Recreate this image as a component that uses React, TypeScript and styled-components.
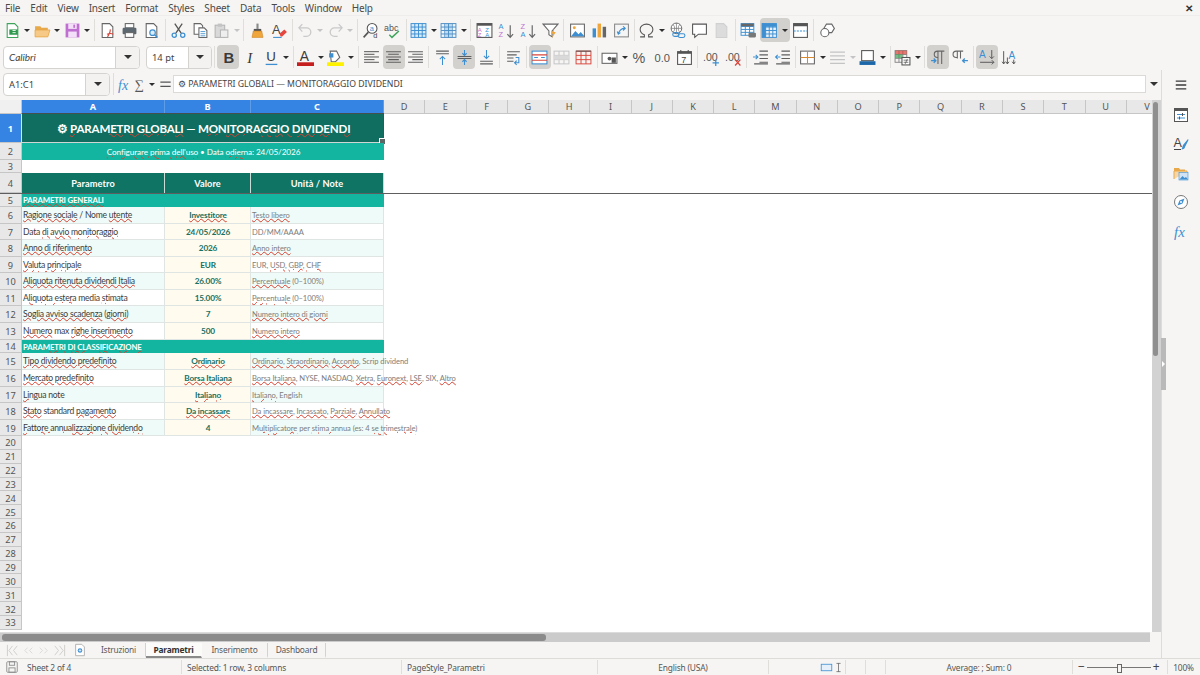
import React from "react";
import styled, { createGlobalStyle } from "styled-components";

const UI_FONT = `"Noto Sans", "Open Sans", sans-serif`;
const CELL_FONT = `Lato, Carlito, "Noto Sans", sans-serif`;

const GlobalStyle = createGlobalStyle`
  html, body { margin: 0; padding: 0; background: #f6f5f4; }
  * { box-sizing: border-box; }
`;

const Page = styled.div`
  width: 1200px;
  height: 675px;
  overflow: hidden;
  display: flex;
  flex-direction: column;
  background: #f6f5f4;
  font-family: ${UI_FONT};
  color: #3d3d3d;
`;

const MenuBar = styled.div`
  height: 16px;
  flex: none;
  display: flex;
  align-items: center;
  justify-content: space-between;
  padding: 0 7px 0 5px;
  border-bottom: 1px solid #eeedeb;
`;

const MenuItems = styled.div`
  display: flex;
  gap: 10px;
  font-size: 10px;
  letter-spacing: -0.18px;
  color: #4a4a4a;
`;

const CloseMark = styled.span`
  font-size: 10px;
  font-weight: 700;
  color: #333;
`;

const Toolbar = styled.div<{ $pad?: number; $h: number }>`
  height: ${(p) => p.$h}px;
  flex: none;
  display: flex;
  align-items: center;
  padding-left: ${(p) => p.$pad ?? 2}px;
`;

const IconButton = styled.div<{ $active?: boolean; $narrow?: boolean; $split?: boolean }>`
  width: ${(p) => (p.$narrow ? 20 : 22)}px;
  height: 24px;
  flex: none;
  display: flex;
  align-items: center;
  justify-content: center;
  border-radius: ${(p) => (p.$split ? "4px 0 0 4px" : "4px")};
  background: ${(p) => (p.$active ? "#d3d1ce" : "transparent")};
`;

const Drop = styled.div<{ $active?: boolean; $dim?: boolean }>`
  width: 10px;
  height: 24px;
  flex: none;
  display: flex;
  align-items: center;
  justify-content: center;
  border-radius: 0 4px 4px 0;
  background: ${(p) => (p.$active ? "#d3d1ce" : "transparent")};
  &::after {
    content: "";
    border-left: 3px solid transparent;
    border-right: 3px solid transparent;
    border-top: 3px solid ${(p) => (p.$dim ? "#c4c4c4" : "#2e2e2e")};
  }
`;

const Sep = styled.div<{ $w?: number }>`
  width: ${(p) => p.$w ?? 4.75}px;
  height: 22px;
  flex: none;
  display: flex;
  justify-content: center;
  &::after {
    content: "";
    width: 1px;
    background: #e0dedb;
  }
`;

const Combo = styled.div<{ $w: number; $arrow: number; $ml?: number }>`
  width: ${(p) => p.$w}px;
  height: 23px;
  flex: none;
  margin-left: ${(p) => p.$ml ?? 0}px;
  display: flex;
  background: #fff;
  border: 1px solid #d5d3cf;
  border-radius: 4px;
  overflow: hidden;
  & > span {
    flex: 1;
    display: flex;
    align-items: center;
    padding-left: 5px;
    font-size: 9.4px;
    color: #444;
  }
  & > div {
    width: ${(p) => p.$arrow}px;
    display: flex;
    align-items: center;
    justify-content: center;
    background: #f3f2f0;
    border-left: 1px solid #d5d3cf;
  }
  & > div::after {
    content: "";
    border-left: 4px solid transparent;
    border-right: 4px solid transparent;
    border-top: 4px solid #333;
  }
`;

const FontName = styled.span`
  font-family: ${CELL_FONT};
  font-style: italic;
  font-size: 10px !important;
`;

const Middle = styled.div`
  flex: 1;
  min-height: 0;
  display: flex;
`;

const MainColumn = styled.div`
  width: 1161px;
  flex: none;
  display: flex;
  flex-direction: column;
`;

const Sidebar = styled.div`
  flex: 1;
  position: relative;
  display: flex;
  flex-direction: column;
  align-items: center;
  padding: 4px 0 0 0;
  gap: 7px;
  border-left: 1px solid #dedcd9;
`;

const SidebarButton = styled.div<{ $top?: boolean }>`
  width: 22px;
  height: 22px;
  margin-bottom: ${(p) => (p.$top ? 1 : 0)}px;
  display: flex;
  align-items: center;
  justify-content: center;
`;

const SideHandle = styled.div`
  position: absolute;
  left: -1px;
  top: 268px;
  width: 5px;
  height: 52px;
  background: #b9b9b9;
  display: flex;
  align-items: center;
  &::after {
    content: "";
    border-top: 3px solid transparent;
    border-bottom: 3px solid transparent;
    border-left: 3px solid #fff;
    margin-left: 1px;
  }
`;

const FormulaBar = styled.div`
  height: 30px;
  flex: none;
  display: flex;
  align-items: center;
  padding: 0 0 2px 3px;
`;

const FormulaIcon = styled.div<{ $w: number }>`
  width: ${(p) => p.$w}px;
  height: 22px;
  flex: none;
  display: flex;
  align-items: center;
  justify-content: center;
`;

const FormulaInput = styled.div`
  width: 973px;
  height: 18px;
  flex: none;
  background: #fff;
  border: 1px solid #dcdad6;
  display: flex;
  align-items: center;
  padding-left: 4px;
  font-size: 8.7px;
  color: #444;
  white-space: nowrap;
`;

const FormulaDrop = styled.div`
  flex: 1;
  display: flex;
  justify-content: center;
  &::after {
    content: "";
    border-left: 4px solid transparent;
    border-right: 4px solid transparent;
    border-top: 4px solid #333;
  }
`;

const SheetArea = styled.div`
  height: 532px;
  flex: none;
  display: flex;
`;

const Sheet = styled.div`
  width: 1152px;
  flex: none;
  overflow: hidden;
  background: #fff;
  display: flex;
  flex-direction: column;
  position: relative;
`;

const HeaderRow = styled.div`
  height: 14px;
  flex: none;
  display: flex;
  background: #e8e8e8;
  border-bottom: 1px solid #c6c6c6;
`;

const Corner = styled.div`
  width: 22px;
  flex: none;
  background: #f0f0f0;
  border-right: 1px solid #c6c6c6;
`;

const ColHead = styled.div<{ $w: number; $on?: boolean }>`
  width: ${(p) => p.$w}px;
  flex: none;
  display: flex;
  align-items: center;
  justify-content: center;
  font-size: 9.2px;
  font-weight: ${(p) => (p.$on ? 700 : 400)};
  color: ${(p) => (p.$on ? "#fff" : "#555")};
  background: ${(p) => (p.$on ? "#3584e4" : "transparent")};
  border-right: 1px solid ${(p) => (p.$on ? "#5d9ce8" : "#c6c6c6")};
`;

const Row = styled.div<{ $h: number; $frozen?: boolean }>`
  height: ${(p) => p.$h}px;
  flex: none;
  display: flex;
  position: relative;
  ${(p) => (p.$frozen ? "box-shadow: 0 1px 0 #5e5e5e; z-index: 1;" : "")}
`;

const RowHead = styled.div<{ $on?: boolean }>`
  width: 22px;
  flex: none;
  display: flex;
  align-items: center;
  justify-content: center;
  padding-top: 1px;
  font-size: 9.2px;
  font-weight: ${(p) => (p.$on ? 700 : 400)};
  color: ${(p) => (p.$on ? "#fff" : "#555")};
  background: ${(p) => (p.$on ? "#3584e4" : "#e8e8e8")};
  border-right: 1px solid #c6c6c6;
  border-bottom: 1px solid #c6c6c6;
`;

const Cell = styled.div<{ $w: number; $bg?: string; $tone?: "label" | "value" | "note" }>`
  width: ${(p) => p.$w}px;
  flex: none;
  display: flex;
  align-items: center;
  justify-content: ${(p) => (p.$tone === "value" ? "center" : "flex-start")};
  padding-left: 1px;
  white-space: nowrap;
  font-family: ${CELL_FONT};
  background: ${(p) => p.$bg ?? "#fff"};
  border-right: 1px solid #dfe5e3;
  border-bottom: 1px solid #dfe5e3;
  font-size: ${(p) => (p.$tone === "note" ? 7.6 : p.$tone === "value" ? 8.2 : 8.6)}px;
  letter-spacing: ${(p) => (p.$tone === "note" ? -0.08 : p.$tone === "value" ? -0.15 : -0.25)}px;
  font-weight: ${(p) => (p.$tone === "value" ? 700 : 400)};
  color: ${(p) => (p.$tone === "note" ? "#7d7d7d" : p.$tone === "value" ? "#17705f" : "#3c3c3c")};
`;

const Banner = styled.div<{ $bg: string; $size: number; $bold?: boolean; $center?: boolean; $track?: number }>`
  width: 362px;
  flex: none;
  display: flex;
  align-items: center;
  justify-content: ${(p) => (p.$center ? "center" : "flex-start")};
  padding-left: 1px;
  white-space: nowrap;
  font-family: ${CELL_FONT};
  font-size: ${(p) => p.$size}px;
  font-weight: ${(p) => (p.$bold ? 700 : 400)};
  letter-spacing: ${(p) => p.$track ?? 0}px;
  color: #fff;
  background: ${(p) => p.$bg};
`;

const HeadCell = styled.div<{ $w: number }>`
  width: ${(p) => p.$w}px;
  flex: none;
  display: flex;
  align-items: center;
  justify-content: center;
  font-family: ${CELL_FONT};
  font-size: 9.2px;
  font-weight: 700;
  letter-spacing: 0.1px;
  color: #fff;
  background: #0f7464;
  border-right: 1px solid #c9dcd8;
`;

const Selection = styled.div`
  position: absolute;
  left: 21px;
  top: -1px;
  width: 363px;
  height: 30px;
  border: 1px solid #44504d;
  border-left-color: #dfe5e3;
  border-bottom-color: #cfd6d4;
  pointer-events: none;
  &::after {
    content: "";
    position: absolute;
    right: -3px;
    bottom: -3px;
    width: 5px;
    height: 5px;
    background: #5c6664;
    border: 1px solid #fff;
  }
`;

const Spell = styled.span`
  text-decoration: underline wavy #d8402f 0.7px;
  text-underline-offset: 0px;
`;

const VScroll = styled.div`
  flex: 1;
  background: #d2d2d2;
  padding: 2px 3px 0 1px;
`;

const VThumb = styled.div`
  height: 254px;
  background: #8f8f8f;
  border-radius: 3px;
`;

const HScroll = styled.div`
  height: 10px;
  width: 1150px;
  flex: none;
  background: #cbcbcb;
  padding: 1px 0 0 2px;
  border-top: 1px solid #dcdcdc;
`;

const HThumb = styled.div`
  width: 544px;
  height: 7px;
  background: #8b8b8b;
  border-radius: 3px;
`;

const TabBar = styled.div`
  height: 16px;
  flex: none;
  display: flex;
  align-items: center;
  padding-left: 6px;
  font-size: 8.4px;
  letter-spacing: -0.18px;
  color: #555;
`;

const NavArrows = styled.div`
  width: 60px;
  display: flex;
  align-items: center;
`;

const Tab = styled.div<{ $on?: boolean; $w: number }>`
  width: ${(p) => p.$w}px;
  height: 15px;
  flex: none;
  display: flex;
  align-items: center;
  justify-content: center;
  font-weight: ${(p) => (p.$on ? 700 : 400)};
  color: ${(p) => (p.$on ? "#333" : "#5a5a5a")};
  border-right: 1px solid ${(p) => (p.$on ? "transparent" : "#d4d2cf")};
  border-bottom: 2px solid ${(p) => (p.$on ? "#8a8a8a" : "transparent")};
  background: ${(p) => (p.$on ? "#fbfbfa" : "transparent")};
`;

const NewTab = styled.div`
  width: 19px;
  margin-left: 7px;
  display: flex;
  align-items: center;
`;

const StatusBar = styled.div`
  height: 17px;
  flex: none;
  display: flex;
  align-items: center;
  border-top: 1px solid #dedcd9;
  font-size: 8.4px;
  letter-spacing: -0.18px;
  color: #555;
`;

const StatusCell = styled.div<{ $w: number; $center?: boolean; $pad?: number; $noline?: boolean }>`
  width: ${(p) => p.$w}px;
  height: 14px;
  flex: none;
  display: flex;
  align-items: center;
  justify-content: ${(p) => (p.$center ? "center" : "flex-start")};
  padding-left: ${(p) => p.$pad ?? 0}px;
  white-space: nowrap;
  border-right: 1px solid ${(p) => (p.$noline ? "transparent" : "#e0deda")};
`;

const SheetCount = styled.span`
  margin-left: 8px;
`;

const ZoomTrack = styled.div`
  width: 64px;
  height: 1px;
  margin: 0 2px;
  background: #777;
  position: relative;
  &::after {
    content: "";
    position: absolute;
    left: 30px;
    top: -3px;
    width: 3px;
    height: 7px;
    background: #f6f5f4;
    border: 1px solid #666;
  }
`;

const ZoomSign = styled.span`
  font-size: 12px;
  line-height: 12px;
  color: #444;
`;

// toolbar drawings, 16 unit box
const grid = (x: number, y: number, w: number, h: number, cols: number, rows: number, c: string) => (
  <g stroke={c} fill="none" strokeWidth="0.9">
    <rect x={x} y={y} width={w} height={h} />
    {Array.from({ length: cols - 1 }, (_, i) => (
      <line key={"c" + i} x1={x + ((i + 1) * w) / cols} x2={x + ((i + 1) * w) / cols} y1={y} y2={y + h} />
    ))}
    {Array.from({ length: rows - 1 }, (_, i) => (
      <line key={"r" + i} y1={y + ((i + 1) * h) / rows} y2={y + ((i + 1) * h) / rows} x1={x} x2={x + w} />
    ))}
  </g>
);

const lines = (x: number, w: number, ys: number[], c = "#666", shortEvery = false) => (
  <g stroke={c} strokeWidth="1">
    {ys.map((y, i) => (
      <line key={i} x1={x} x2={x + (shortEvery && i % 2 ? w * 0.7 : w)} y1={y} y2={y} />
    ))}
  </g>
);

const doc = "M3 1.5h7l3 3v10H3z";

const ICONS: Record<string, React.ReactNode> = {
  newDoc: <><path d={doc} fill="#fff" stroke="#3fa45b" strokeWidth="1" /><rect x="5" y="7" width="8" height="5" fill="#2f9a4f" /><path d="M8 8h3M8 10h3" stroke="#fff" strokeWidth=".8" /></>,
  open: <><path d="M1 4h5l1 1.5h6V8H1z" fill="#e7a94a" /><path d="M1 14V7.5h14L13 14z" fill="#f6c987" stroke="#e7a94a" strokeWidth=".8" /></>,
  save: <><path d="M1.5 1.5h13v13h-13z" fill="#bf6fd0" /><rect x="4" y="1.5" width="8" height="5" fill="#f3dff7" /><rect x="4" y="9" width="8" height="5.5" fill="#f3dff7" /><rect x="8.8" y="2.5" width="1.6" height="3" fill="#bf6fd0" /></>,
  pdf: <><path d={doc} fill="#fff" stroke="#666" strokeWidth="1" /><path d="M8 14c2-3 3-5 2.5-7M7.5 11.5c2-.8 4-1 6 0" fill="none" stroke="#d9453a" strokeWidth="1.1" /></>,
  print: <><rect x="4" y="1.5" width="8" height="4" fill="#fff" stroke="#666" /><rect x="1.5" y="5.5" width="13" height="6" rx="1" fill="#5c6770" /><rect x="4" y="10" width="8" height="4.5" fill="#fff" stroke="#666" /></>,
  preview: <><path d={doc} fill="#fff" stroke="#666" /><circle cx="9" cy="10" r="2.6" fill="#dcecf8" stroke="#3d8fd1" strokeWidth="1.1" /><path d="M11 12l2.5 2.5" stroke="#3d8fd1" strokeWidth="1.4" /></>,
  cut: <><path d="M4.5 1.5l6 9M11.5 1.5l-6 9" stroke="#555" strokeWidth="1.2" /><circle cx="4" cy="12.5" r="2" fill="none" stroke="#3d8fd1" strokeWidth="1.2" /><circle cx="12" cy="12.5" r="2" fill="none" stroke="#3d8fd1" strokeWidth="1.2" /></>,
  copy: <><path d="M2 1.5h6l2 2v8H2z" fill="#fff" stroke="#666" /><path d="M6.5 5.5h5l2.5 2.5v6.5H6.5z" fill="#fff" stroke="#666" /><path d="M8 9h4.5M8 11h4.5M8 13h4.5" stroke="#3d8fd1" strokeWidth=".8" /></>,
  paste: <><rect x="2" y="3" width="9" height="11.5" fill="#d9d9d9" stroke="#b5b5b5" /><rect x="4.5" y="1.5" width="4" height="3" fill="#c4c4c4" /><rect x="7" y="7.5" width="7" height="7" fill="#eee" stroke="#b5b5b5" /></>,
  brush: <><path d="M7 1.5h2v5H7z" fill="#8a8a8a" /><path d="M4.5 6.5h7v2h-7z" fill="#555" /><path d="M4 8.5h8l1.2 6H2.8z" fill="#f0a63a" stroke="#c97f1e" strokeWidth=".5" /></>,
  clear: <><text x="1" y="11" fontSize="12" fontFamily="Liberation Sans" fill="#444">A</text><path d="M8 11l4.5-4 2.5 2.5-4.5 4.2H9z" fill="#e5463e" /><path d="M2 14.5h8" stroke="#3d8fd1" /></>,
  undo: <path d="M5 2L1.8 5.5 5 9M2 5.5h7a4 4 0 010 8H6" fill="none" stroke="#c9c9c9" strokeWidth="1.2" />,
  redo: <path d="M11 2l3.2 3.5L11 9M14 5.5H7a4 4 0 000 8h3" fill="none" stroke="#c9c9c9" strokeWidth="1.2" />,
  find: <><circle cx="9.5" cy="6" r="4.6" fill="#fff" stroke="#555" /><path d="M6 9.5l-4.5 5" stroke="#555" strokeWidth="1.5" /><text x="7.4" y="8" fontSize="7" fontFamily="Liberation Sans" fill="#3d8fd1">a</text><text x="10.5" y="15.5" fontSize="7" fontFamily="Liberation Sans" fill="#444">d</text></>,
  spell: <><text x="0" y="8" fontSize="8.4" fontFamily="Liberation Sans" fill="#555">abc</text><path d="M5 12l2.5 2.5L14 8.5" fill="none" stroke="#3fa45b" strokeWidth="1.4" /></>,
  table: <><rect x="1" y="1.5" width="14" height="13" fill="#dcebf8" />{grid(1, 1.5, 14, 13, 4, 4, "#3d8fd1")}</>,
  cols: <><rect x="1" y="1.5" width="14" height="13" fill="#eef5fb" />{grid(1, 1.5, 14, 13, 4, 4, "#4f8fc4")}<rect x="5.5" y="1.5" width="5" height="13" fill="#3d8fd1" opacity=".25" /></>,
  sortBox: <><rect x="1" y="1.5" width="14" height="13" fill="#fff" stroke="#555" /><rect x="1" y="1.5" width="14" height="2" fill="#555" /><text x="1.6" y="9" fontSize="5.6" fontFamily="Liberation Sans" fill="#bf6fd0">A</text><text x="8.6" y="9" fontSize="5.6" fontFamily="Liberation Sans" fill="#3d8fd1">Z</text><text x="1.6" y="14" fontSize="5.6" fontFamily="Liberation Sans" fill="#bf6fd0">Z</text><text x="8.6" y="14" fontSize="5.6" fontFamily="Liberation Sans" fill="#3d8fd1">A</text></>,
  sortAsc: <><text x="0.5" y="7" fontSize="7" fontFamily="Liberation Sans" fill="#3d8fd1">A</text><text x="0.5" y="14.5" fontSize="7" fontFamily="Liberation Sans" fill="#bf6fd0">Z</text><path d="M11.5 3v11M8.8 11.5l2.7 3 2.7-3" fill="none" stroke="#666" strokeWidth="1.1" /></>,
  sortDesc: <><text x="0.5" y="7" fontSize="7" fontFamily="Liberation Sans" fill="#bf6fd0">Z</text><text x="0.5" y="14.5" fontSize="7" fontFamily="Liberation Sans" fill="#3d8fd1">A</text><path d="M11.5 3v11M8.8 11.5l2.7 3 2.7-3" fill="none" stroke="#666" strokeWidth="1.1" /></>,
  filter: <><path d="M1 2h14L9.5 8.5V14L6.5 12V8.5z" fill="#fff" stroke="#666" /><path d="M11.5 6l-3 5h2l-1 4 3.5-5.5h-2z" fill="#f0a63a" /></>,
  image: <><rect x="1.5" y="2" width="13" height="12" fill="#fff" stroke="#666" /><circle cx="5" cy="5.5" r="1.4" fill="#f0a63a" /><path d="M2 13.5l4-5 3 3 2-2 3.5 4z" fill="#3d8fd1" /></>,
  chart: <><rect x="1.5" y="6" width="3.2" height="8.5" fill="#3d8fd1" /><rect x="6.2" y="1.5" width="3.2" height="13" fill="#f0a63a" /><rect x="11" y="4.5" width="3.2" height="10" fill="#666" /></>,
  pivot: <><rect x="1.5" y="2" width="13" height="12" fill="#f5f5f5" stroke="#888" /><path d="M5 11c1-3 3-5 6-5M9.5 4.2L11.5 6 9.5 8M4 9l1 2.5L7 10" fill="none" stroke="#3d8fd1" /></>,
  omega: <path d="M2 14h4v-2C3.5 11 2 9 2 6.8 2 4 4.7 2 8 2s6 2 6 4.8c0 2.2-1.5 4.2-4 5.2v2h4" fill="none" stroke="#555" strokeWidth="1" />,
  link: <><circle cx="7" cy="6" r="5" fill="#fff" stroke="#666" strokeWidth=".9" /><path d="M2 6h10M7 1v10M4 2.5c1.8 2 1.8 5 0 7M10 2.5c-1.8 2-1.8 5 0 7" fill="none" stroke="#666" strokeWidth=".6" /><rect x="3.5" y="10" width="6" height="3.5" rx="1.7" fill="none" stroke="#3d8fd1" /><rect x="8.5" y="11" width="6.5" height="3.5" rx="1.7" fill="none" stroke="#3d8fd1" /></>,
  comment: <path d="M1.5 2h13v9.5H7l-3.5 3v-3h-2z" fill="#fff" stroke="#555" />,
  note: <path d="M3 1.5h7l3 3v10H3z" fill="#dcdcdc" stroke="#d0d0d0" />,
  headers: <><rect x="1" y="1.5" width="12" height="11" fill="#fff" />{grid(1, 1.5, 12, 11, 3, 4, "#3d8fd1")}<rect x="1" y="1.5" width="12" height="2.5" fill="#666" /><rect x="8" y="10" width="7" height="4.5" rx="1" fill="#777" /></>,
  freeze: <><rect x="1" y="1.5" width="13.5" height="13" fill="#e8f1fa" />{grid(1, 1.5, 13.5, 13, 4, 4, "#3d8fd1")}<rect x="1" y="1.5" width="13.5" height="3" fill="#3d8fd1" /><rect x="1" y="1.5" width="3.4" height="13" fill="#3d8fd1" /></>,
  split: <><rect x="1.5" y="1.5" width="13" height="13" fill="#fff" stroke="#555" /><rect x="1.5" y="1.5" width="13" height="2.5" fill="#555" /><path d="M1.5 8.5h13" stroke="#3d8fd1" strokeDasharray="2 1" /></>,
  shapes: <><path d="M7 2h5l2.5 4-2.5 4H7L4.5 6z" fill="#fff" stroke="#666" /><circle cx="5.5" cy="10" r="3.8" fill="#fff" stroke="#666" /></>,
  bold: <text x="3.2" y="13" fontSize="14" fontWeight="700" fontFamily="Liberation Sans" fill="#3a3a3a">B</text>,
  italic: <text x="5" y="13" fontSize="14" fontStyle="italic" fontFamily="Liberation Serif" fill="#3a3a3a">I</text>,
  underline: <><text x="3" y="11.5" fontSize="12.5" fontFamily="Liberation Sans" fill="#3a3a3a">U</text><path d="M2.5 14.5h11" stroke="#3d8fd1" strokeWidth="1.2" /></>,
  fontColor: <><text x="2.6" y="11" fontSize="13" fontFamily="Liberation Sans" fill="#3a3a3a">A</text><rect x="0" y="12.5" width="16" height="3.5" fill="#c5201f" /></>,
  bgColor: <><path d="M3 2h6l3 6-4 4H4z" fill="#fff" stroke="#666" /><rect x="2" y="4" width="4" height="4" fill="#3d8fd1" /><rect x="0" y="12.5" width="16" height="3.5" fill="#fff200" /></>,
  left: lines(1, 14, [2.5, 5, 7.5, 10, 12.5], "#5f5f5f", true),
  center: <g stroke="#5f5f5f"><path d="M1 2.5h14M3 5h10M1 7.5h14M3 10h10M1 12.5h14" /></g>,
  right: <g stroke="#5f5f5f"><path d="M1 2.5h14M5 5h10M1 7.5h14M5 10h10M1 12.5h14" /></g>,
  top: <><path d="M2 2h12M2 4.5h12" stroke="#5f5f5f" /><path d="M8 15V7M5.5 9.5L8 7l2.5 2.5" fill="none" stroke="#3d8fd1" /></>,
  middle: <><path d="M1.5 7h13M1.5 9h13" stroke="#5f5f5f" /><path d="M8 1v5M6 4l2 2 2-2M8 15v-5M6 12l2-2 2 2" fill="none" stroke="#3d8fd1" /></>,
  bottom: <><path d="M2 11.5h12M2 14h12" stroke="#5f5f5f" /><path d="M8 1v8M5.5 6.5L8 9l2.5-2.5" fill="none" stroke="#3d8fd1" /></>,
  wrap: <><path d="M2 2.5h12M2 5.5h9M2 8.5h6M2 11.5h6" stroke="#5f5f5f" /><path d="M10 8h3v5H9.5M11 11l-2 2 2 2" fill="none" stroke="#3d8fd1" /></>,
  merge: <><rect x="1" y="2" width="14" height="12" fill="#fff" stroke="#3d8fd1" /><path d="M1 5.5h14M1 10.5h14" stroke="#d9453a" /><path d="M3 8h3.5M13 8H9.5" stroke="#3d8fd1" /></>,
  mergeOff: <>{grid(1, 2, 14, 12, 3, 3, "#c4c4c4")}<rect x="1" y="6" width="14" height="4" fill="#d9d9d9" /></>,
  splitCells: <>{grid(1, 2, 14, 12, 3, 3, "#d9453a")}<path d="M1 2h14" stroke="#555" /></>,
  currency: <><rect x="1" y="4" width="14" height="9.5" fill="#fff" stroke="#666" /><circle cx="8" cy="9" r="1.8" fill="#555" /><rect x="10" y="8" width="4" height="5" fill="#555" /></>,
  percent: <text x="0.5" y="13" fontSize="13.5" fontFamily="Liberation Sans" fill="#555">%</text>,
  number: <text x="0.5" y="12.5" fontSize="10.5" fontFamily="Liberation Sans" fill="#555">0.0</text>,
  date: <><rect x="1.5" y="2.5" width="13" height="12" fill="#fff" stroke="#555" /><rect x="1.5" y="2.5" width="13" height="2" fill="#555" /><path d="M4.5 1v3M11.5 1v3" stroke="#555" /><text x="5" y="13" fontSize="8.5" fontFamily="Liberation Sans" fill="#444">7</text></>,
  decAdd: <><text x="0" y="11" fontSize="10" fontFamily="Liberation Sans" fill="#555">.00</text><path d="M12 10v6M9 13h6" stroke="#3d8fd1" strokeWidth="1.2" /></>,
  decDel: <><text x="0" y="11" fontSize="10" fontFamily="Liberation Sans" fill="#555">.00</text><path d="M9.5 10l5 5.5M14.5 10l-5 5.5" stroke="#d9453a" strokeWidth="1.2" /></>,
  indentMore: <><path d="M7 2h8M7 5.5h8M7 9h8M7 12.5h8M2 14h13" stroke="#5f5f5f" /><path d="M1 7.5h4M3.5 5.5l2 2-2 2" fill="none" stroke="#3d8fd1" /></>,
  indentLess: <><path d="M7 2h8M7 5.5h8M7 9h8M7 12.5h8M2 14h13" stroke="#5f5f5f" /><path d="M6 7.5H2M3.5 5.5l-2 2 2 2" fill="none" stroke="#3d8fd1" /></>,
  borders: <><rect x="1.5" y="2" width="13" height="12" fill="#fff" stroke="#666" /><path d="M8 2v12M1.5 8h13" stroke="#d98a2e" /></>,
  borderStyle: <path d="M1 3h14M1 6.5h14M1 10h14M1 13.5h14" stroke="#c4c4c4" strokeWidth="1.2" />,
  borderColor: <><rect x="2.5" y="1.5" width="11" height="9.5" fill="#fff" stroke="#555" /><rect x="0.5" y="11.5" width="15" height="3.5" fill="#1d66a8" /></>,
  conditional: <>{grid(1, 1.5, 11, 11, 3, 3, "#888")}<rect x="1" y="1.5" width="11" height="3.5" fill="#d9453a" opacity=".7" /><rect x="1" y="5" width="7" height="3.5" fill="#3fa45b" opacity=".7" /><rect x="7.5" y="8" width="7.5" height="7" fill="#fff" stroke="#555" /><path d="M9 10.5h4.5M9 12.5h4.5M12.5 9.5l-2 4.5" stroke="#555" strokeWidth=".7" /></>,
  ltr: <><path d="M7.5 2v12M11 2v12M13.5 2H7a3 3 0 000 6h1" fill="none" stroke="#666" /><path d="M1 11h4M3.5 9l2 2-2 2" fill="none" stroke="#3d8fd1" strokeWidth="1.2" /></>,
  rtl: <><path d="M5 2v7M8 2v7M10.5 2H4a3 3 0 000 6h1" fill="none" stroke="#666" /><path d="M15 11h-5M12 9l-2 2 2 2" fill="none" stroke="#3d8fd1" strokeWidth="1.2" /></>,
  horiz: <><text x="0" y="8.5" fontSize="9.5" fontFamily="Liberation Sans" fill="#3d8fd1">A</text><path d="M12 1v8M10 7l2 2 2-2M1 12.5h13M12 10.5l2 2-2 2" fill="none" stroke="#555" strokeWidth=".9" /></>,
  vert: <><text x="7" y="9.5" fontSize="9.5" fontFamily="Liberation Sans" fill="#3d8fd1">A</text><path d="M2.5 2v12M1 12l1.5 2L4 12M6 8v6M4.5 12L6 14l1.5-2M12 10v4M10.5 12l1.5 2 1.5-2" fill="none" stroke="#555" strokeWidth=".9" /></>,
  fx: <text x="1" y="13" fontSize="14" fontStyle="italic" fontFamily="Liberation Serif" fill="#3d8fd1">fx</text>,
  sigma: <text x="2" y="13.5" fontSize="15" fontFamily="Liberation Serif" fill="#555">∑</text>,
  equals: <path d="M2.5 5.5h11M2.5 10h11" stroke="#555" strokeWidth="1.5" />,
  menu: <path d="M2 3.5h12M2 8h12M2 12.5h12" stroke="#3a3a3a" strokeWidth="1.5" />,
  props: <><rect x="1.5" y="1.5" width="13" height="13" fill="#fff" stroke="#555" /><rect x="1.5" y="1.5" width="13" height="2.5" fill="#555" /><path d="M4 7.5h8M4 11h8" stroke="#3d8fd1" /><path d="M9.5 6v3M6.5 9.5v3" stroke="#555" /></>,
  styles: <><text x="0.5" y="11" fontSize="12.5" fontFamily="Liberation Sans" fill="#444">A</text><path d="M1 13.5h7" stroke="#444" /><path d="M15 3l-5 6-1.5 4.5c2 0 3.5-1 3.5-2.5l3.5-7z" fill="#3d8fd1" /></>,
  gallery: <><path d="M1 3h5l1 1.5h5V8H1z" fill="#e7a94a" /><path d="M1 14V6h13v1" fill="#f6d6a6" stroke="#e7a94a" /><rect x="6" y="7.5" width="9" height="7.5" fill="#cfe3f5" stroke="#3d8fd1" strokeWidth=".6" /><path d="M6.5 14.5l3-3.5 2 2 1.5-1 2 2.5z" fill="#3d8fd1" /></>,
  navigator: <><circle cx="8" cy="8" r="6.5" fill="#fff" stroke="#777" /><path d="M11.5 4.5l-2 5-5 2 2-5z" fill="#3d8fd1" /><circle cx="8" cy="8" r="1" fill="#fff" /></>,
  cellRange: <rect x="1.5" y="4" width="13" height="8" fill="#e6f0fa" stroke="#3d8fd1" />,
  cursor: <path d="M5 2h6M5 14h6M8 2v12" stroke="#555" fill="none" />,
  saved: <><rect x="2" y="2" width="12" height="12" rx="1" fill="none" stroke="#8a8a8a" /><rect x="5" y="2" width="6" height="4" fill="none" stroke="#8a8a8a" /><rect x="4.5" y="9" width="7" height="5" fill="none" stroke="#8a8a8a" /></>,
  newSheet: <><path d="M3 1.5h7l3 3v10H3z" fill="#fff" stroke="#aaa" /><circle cx="8" cy="8.5" r="2.6" fill="#3d8fd1" /><path d="M8 7v3M6.5 8.5h3" stroke="#fff" strokeWidth=".8" /></>,
  navs: <path d="M1.5 2v12M7 3L3 8l4 5M12 3L8 8l4 5" fill="none" stroke="#cfcdca" />,
  navsEnd: <path d="M14.5 2v12M9 3l4 5-4 5M4 3l4 5-4 5" fill="none" stroke="#cfcdca" />,
  navsMid: <path d="M7 5L4 8l3 3M12 5L9 8l3 3" fill="none" stroke="#d9d7d4" />,
  navsMidR: <path d="M4 5l3 3-3 3M9 5l3 3-3 3" fill="none" stroke="#d9d7d4" />,
};

const Icon = ({ name, size = 17 }: { name: string; size?: number }) => (
  <svg width={size} height={size} viewBox="0 0 16 16">{ICONS[name]}</svg>
);

// "|" separator, "name" plain icon, "name+" icon with dropdown, "*" marks it as pressed
const renderBar = (items: string[]) =>
  items.map((raw, i) => {
    if (raw === "|") return <Sep key={i} />;
    const active = raw.startsWith("*");
    const drop = raw.endsWith("+") || raw.endsWith("~");
    const name = raw.replace(/[*+~]/g, "");
    if (drop) {
      return (
        <React.Fragment key={i}>
          <IconButton $narrow $split $active={active}><Icon name={name} /></IconButton>
          <Drop $active={active} $dim={raw.endsWith("~")} />
        </React.Fragment>
      );
    }
    return <IconButton key={i} $active={active}><Icon name={name} /></IconButton>;
  });

const TOP_BAR = [
  "newDoc+", "open+", "save+", "|", "pdf", "print", "preview", "|", "cut", "copy", "paste~", "|",
  "brush", "clear", "|", "undo~", "redo~", "|", "find", "spell", "|", "table+", "cols+", "|",
  "sortBox", "sortAsc", "sortDesc", "filter", "|", "image", "chart", "pivot", "|", "omega+", "link",
  "comment", "note", "|", "headers", "*freeze+", "split", "|", "shapes",
];

const FORMAT_BAR = ["*bold", "italic", "underline+", "|", "fontColor+", "bgColor+", "|", "left", "*center", "right", "|", "top", "*middle", "bottom", "|", "wrap", "|", "*merge", "mergeOff", "splitCells", "|", "currency+", "percent", "number", "date", "|", "decAdd", "decDel", "|", "indentMore", "indentLess", "|", "borders+", "borderStyle~", "borderColor+", "|", "conditional+", "|", "*ltr", "rtl", "|", "*horiz", "vert"];

const MENU = ["File", "Edit", "View", "Insert", "Format", "Styles", "Sheet", "Data", "Tools", "Window", "Help"];
const LETTERS = "DEFGHIJKLMNOPQRSTUV".split("");

const spellText = (text: string) =>
  text.split(/(\[[^\]]+\])/).map((part, i) =>
    part.startsWith("[") ? <Spell key={i}>{part.slice(1, -1)}</Spell> : <span key={i}>{part}</span>
  );

const PARAMS_A = [
  ["[Ragione sociale] / Nome [utente]", "[Investitore]", "[Testo libero]", 17],
  ["Data [di avvio monitoraggio]", "24/05/2026", "DD/MM/[AAAA]", 16],
  ["[Anno di riferimento]", "2026", "[Anno intero]", 17],
  ["[Valuta principale]", "EUR", "EUR, [USD], [GBP], [CHF]", 16],
  ["[Aliquota ritenuta dividendi Italia]", "26.00%", "[Percentuale] (0–100%)", 17],
  ["[Aliquota estera] media [stimata]", "15.00%", "[Percentuale] (0–100%)", 16],
  ["[Soglia avviso scadenza] ([giorni])", "7", "[Numero intero di giorni]", 17],
  ["[Numero] max [righe inserimento]", "500", "[Numero intero]", 17],
] as const;

const PARAMS_B = [
  ["[Tipo dividendo predefinito]", "[Ordinario]", "[Ordinario], [Straordinario], [Acconto], Scrip dividend", 17],
  ["[Mercato predefinito]", "[Borsa Italiana]", "[Borsa Italiana], NYSE, NASDAQ, [Xetra], [Euronext], [LSE], SIX, [Altro]", 17],
  ["[Lingua] note", "[Italiano]", "[Italiano], English", 16],
  ["[Stato] standard [pagamento]", "[Da incassare]", "[Da incassare], [Incassato], [Parziale], [Annullato]", 17],
  ["[Fattore annualizzazione dividendo]", "4", "[Multiplicatore] per [stima annua] (es: 4 [se trimestrale])", 16],
] as const;

const DataRow = ({ n, row, odd }: { n: number; row: readonly [string, string, string, number]; odd: boolean }) => (
  <Row $h={row[3]}>
    <RowHead>{n}</RowHead>
    <Cell $w={143} $tone="label" $bg={odd ? "#effbf8" : "#fff"}><span>{spellText(row[0])}</span></Cell>
    <Cell $w={86} $tone="value" $bg="#fffbee"><span>{spellText(row[1])}</span></Cell>
    <Cell $w={133} $tone="note" $bg={odd ? "#effbf8" : "#fff"}><span>{spellText(row[2])}</span></Cell>
  </Row>
);

const EmptyRows = () => (
  <>
    {Array.from({ length: 14 }, (_, i) => (
      <Row key={i} $h={13.85}><RowHead>{20 + i}</RowHead></Row>
    ))}
  </>
);

export default function App() {
  return (
    <Page>
      <GlobalStyle />
      <MenuBar>
        <MenuItems>{MENU.map((m) => <span key={m}>{m}</span>)}</MenuItems>
        <CloseMark>✕</CloseMark>
      </MenuBar>
      <Toolbar $h={28}>{renderBar(TOP_BAR)}</Toolbar>
      <Toolbar $h={26} $pad={3}>
        <Combo $w={137} $arrow={24}><FontName>Calibri</FontName><div /></Combo>
        <Combo $w={66} $arrow={23} $ml={6}><span>14 pt</span><div /></Combo>
        <Sep $w={5} />
        {renderBar(FORMAT_BAR)}
      </Toolbar>
      <Middle>
        <MainColumn>
          <FormulaBar>
            <Combo $w={107} $arrow={24}><span>A1:C1</span><div /></Combo>
            <Sep $w={7} />
            <FormulaIcon $w={16}><Icon name="fx" /></FormulaIcon>
            <FormulaIcon $w={14}><Icon name="sigma" /></FormulaIcon>
            <Drop />
            <FormulaIcon $w={16}><Icon name="equals" size={15} /></FormulaIcon>
            <FormulaInput>⚙ PARAMETRI GLOBALI — MONITORAGGIO DIVIDENDI</FormulaInput>
            <FormulaDrop />
          </FormulaBar>
          <SheetArea>
            <Sheet>
              <HeaderRow>
                <Corner />
                <ColHead $w={143} $on>A</ColHead>
                <ColHead $w={86} $on>B</ColHead>
                <ColHead $w={133} $on>C</ColHead>
                {LETTERS.map((l) => <ColHead key={l} $w={41.27}>{l}</ColHead>)}
              </HeaderRow>
              <Row $h={29}>
                <RowHead $on>1</RowHead>
                <Banner $bg="#0f6e60" $size={11.6} $bold $center $track={-0.2}>
                  <span>{spellText("⚙ [PARAMETRI GLOBALI] — [MONITORAGGIO DIVIDENDI]")}</span>
                </Banner>
                <Selection />
              </Row>
              <Row $h={17}>
                <RowHead>2</RowHead>
                <Banner $bg="#13b5a0" $size={8.2} $center $track={-0.1}>
                  <span>{spellText("[Configurare prima dell'uso] • Data [odierna]: 24/05/2026")}</span>
                </Banner>
              </Row>
              <Row $h={13}><RowHead>3</RowHead></Row>
              <Row $h={20} $frozen>
                <RowHead>4</RowHead>
                <HeadCell $w={143}>Parametro</HeadCell>
                <HeadCell $w={86}>Valore</HeadCell>
                <HeadCell $w={133}>Unità / Note</HeadCell>
              </Row>
              <Row $h={14}>
                <RowHead>5</RowHead>
                <Banner $bg="#13b5a0" $size={7.8} $bold $track={-0.15}>
                  <span>{spellText("[PARAMETRI GENERALI]")}</span>
                </Banner>
              </Row>
              {PARAMS_A.map((row, i) => <DataRow key={i} n={6 + i} row={row} odd={i % 2 === 0} />)}
              <Row $h={13}>
                <RowHead>14</RowHead>
                <Banner $bg="#13b5a0" $size={7.8} $bold $track={-0.15}>
                  <span>{spellText("[PARAMETRI DI CLASSIFICAZIONE]")}</span>
                </Banner>
              </Row>
              {PARAMS_B.map((row, i) => <DataRow key={i} n={15 + i} row={row} odd={i % 2 === 0} />)}
              <EmptyRows />
            </Sheet>
            <VScroll><VThumb /></VScroll>
          </SheetArea>
          <HScroll><HThumb /></HScroll>
          <TabBar>
            <NavArrows>
              <Icon name="navs" size={15} /><Icon name="navsMid" size={15} /><Icon name="navsMidR" size={15} /><Icon name="navsEnd" size={15} />
            </NavArrows>
            <NewTab><Icon name="newSheet" size={14} /></NewTab>
            <Tab $w={54}>Istruzioni</Tab>
            <Tab $w={56} $on>Parametri</Tab>
            <Tab $w={66}>Inserimento</Tab>
            <Tab $w={58}>Dashboard</Tab>
          </TabBar>
        </MainColumn>
        <Sidebar>
          <SidebarButton $top><Icon name="menu" size={14} /></SidebarButton>
          <SidebarButton><Icon name="props" size={16} /></SidebarButton>
          <SidebarButton><Icon name="styles" size={16} /></SidebarButton>
          <SidebarButton><Icon name="gallery" size={16} /></SidebarButton>
          <SidebarButton><Icon name="navigator" size={16} /></SidebarButton>
          <SidebarButton><Icon name="fx" size={17} /></SidebarButton>
          <SideHandle />
        </Sidebar>
      </Middle>
      <StatusBar>
        <StatusCell $w={182} $pad={5}><Icon name="saved" size={14} /><SheetCount>Sheet 2 of 4</SheetCount></StatusCell>
        <StatusCell $w={220} $pad={5}>Selected: 1 row, 3 columns</StatusCell>
        <StatusCell $w={196} $pad={5}>PageStyle_Parametri</StatusCell>
        <StatusCell $w={171} $center>English (USA)</StatusCell>
        <StatusCell $w={77} $pad={51}><Icon name="cellRange" size={13} /><Icon name="cursor" size={11} /></StatusCell>
        <StatusCell $w={20} />
        <StatusCell $w={20} />
        <StatusCell $w={187} $center>Average: ; Sum: 0</StatusCell>
        <StatusCell $w={95} $pad={5}><ZoomSign>−</ZoomSign><ZoomTrack /><ZoomSign>+</ZoomSign></StatusCell>
        <StatusCell $w={32} $center $noline>100%</StatusCell>
      </StatusBar>
    </Page>
  );
}
